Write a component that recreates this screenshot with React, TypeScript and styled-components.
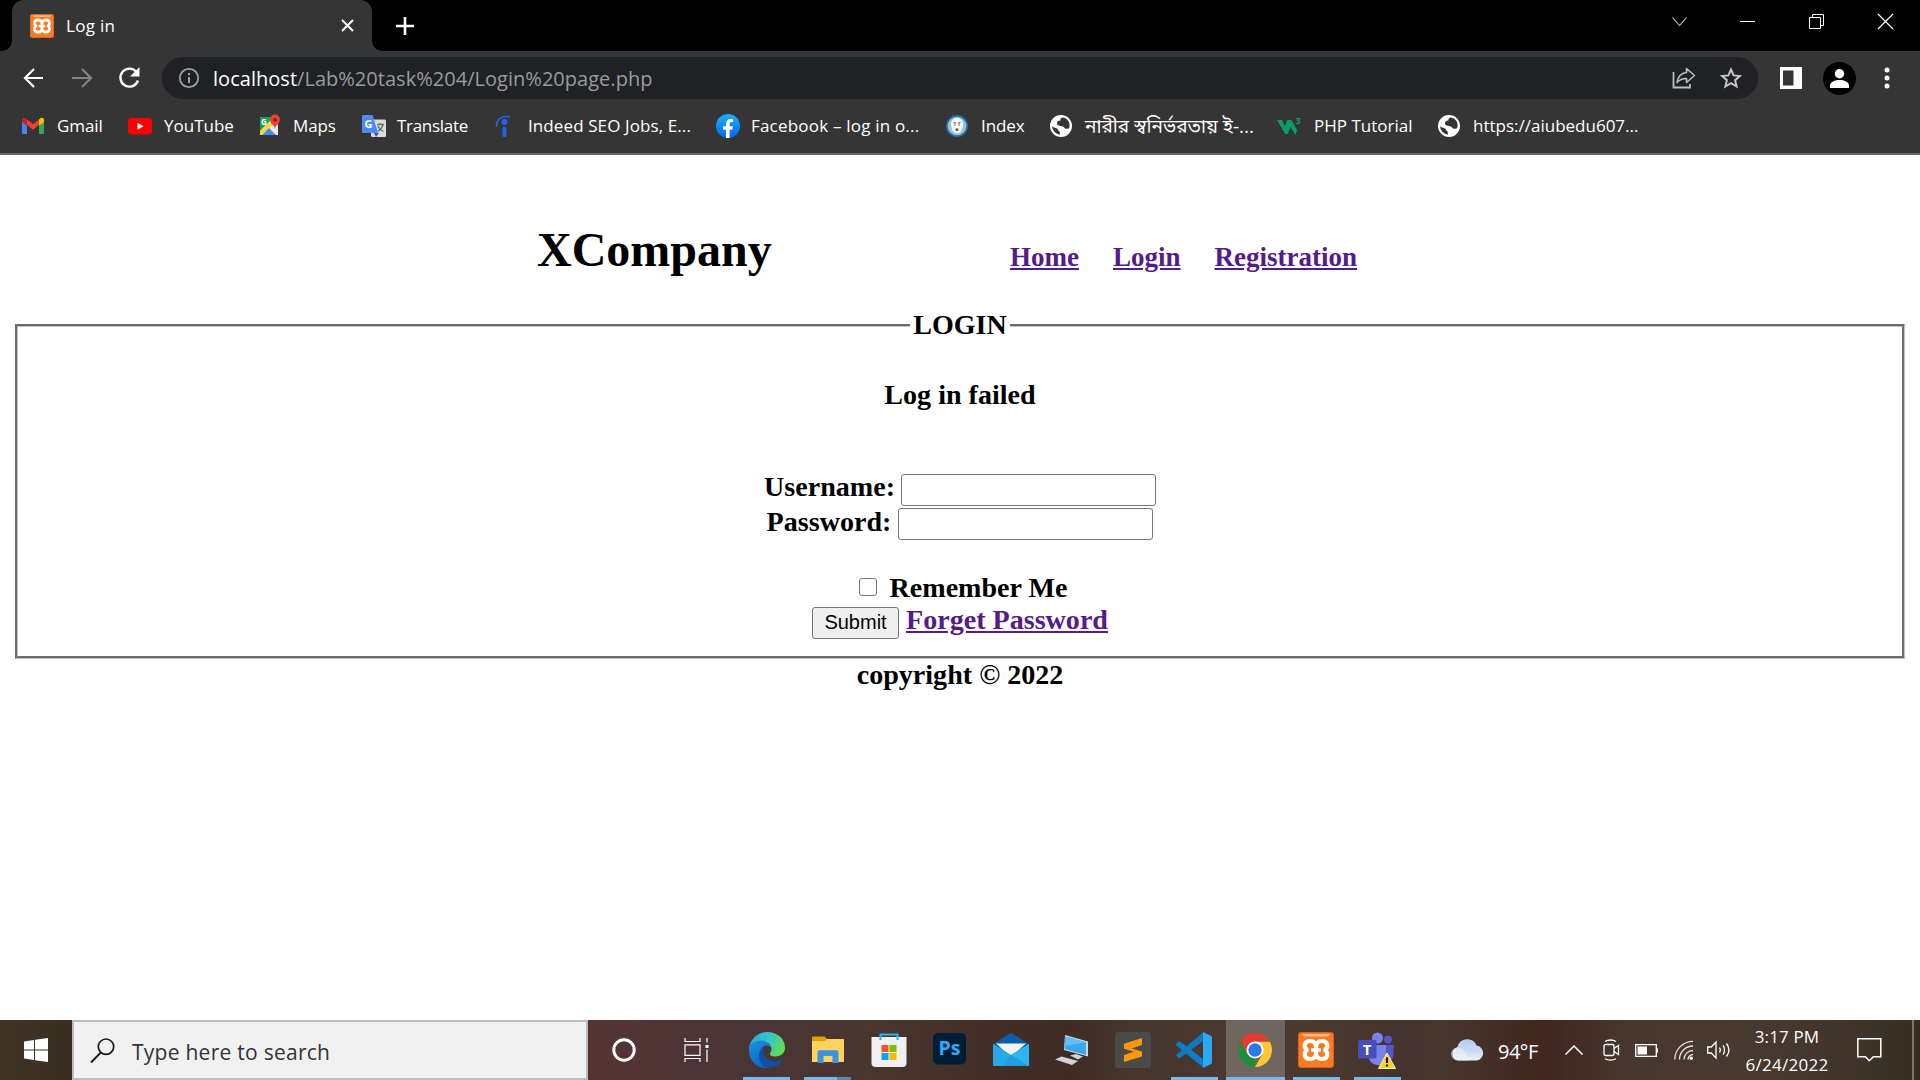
import React from "react";
import styled, { createGlobalStyle } from "styled-components";

const UI = `"Open Sans", "Noto Sans", "Noto Sans Bengali", sans-serif`;
const SERIF = `"Liberation Serif", "Times New Roman", serif`;

const GlobalStyle = createGlobalStyle`
  *, *::before, *::after { box-sizing: border-box; }
  html, body { margin: 0; background: #fff; overflow: hidden; }
  svg { display: block; flex: none; overflow: visible; }
`;

const Screen = styled.div`
  width: 1920px;
  height: 1080px;
  display: flex;
  flex-direction: column;
  overflow: hidden;
`;

/* ---------- browser chrome ---------- */

const TabStrip = styled.header`
  height: 51px;
  flex: none;
  display: flex;
  background: #000;
  padding-left: 12px;
`;

const Tab = styled.div`
  position: relative;
  width: 360px;
  height: 51px;
  display: flex;
  align-items: center;
  padding: 0 18px 0 18px;
  background: #353535;
  border-radius: 12px 12px 0 0;
  &::before, &::after {
    content: "";
    position: absolute;
    bottom: 0;
    width: 10px;
    height: 10px;
  }
  &::before { left: -10px; background: radial-gradient(circle at 0 0, transparent 9.5px, #353535 10px); }
  &::after { right: -10px; background: radial-gradient(circle at 100% 0, transparent 9.5px, #353535 10px); }
`;

const Label = styled.span<{ $ls?: number; $ml?: number; $size?: number; $color?: string; $drop?: number }>`
  font-family: ${UI};
  font-size: ${(p) => p.$size ?? 17}px;
  line-height: 24px;
  color: ${(p) => p.$color ?? "#fff"};
  white-space: nowrap;
  letter-spacing: ${(p) => p.$ls ?? 0}px;
  margin-left: ${(p) => p.$ml ?? 0}px;
  padding-top: ${(p) => p.$drop ?? 0}px;
`;

const Spacer = styled.div`
  flex: 1;
`;

const NewTab = styled.div`
  display: flex;
  align-items: center;
  margin-left: 24px;
`;

const WindowButtons = styled.div`
  display: flex;
  height: 43px;
`;

const WindowButton = styled.div<{ $w: number }>`
  width: ${(p) => p.$w}px;
  display: flex;
  align-items: center;
  justify-content: center;
`;

const Toolbar = styled.div`
  height: 54px;
  flex: none;
  display: flex;
  align-items: center;
  background: #353535;
  padding: 0 20px 0 21px;
`;

const NavIcons = styled.div`
  display: flex;
  align-items: center;
  width: 141px;
  gap: 24.5px;
`;

const AddressBar = styled.div`
  width: 1596px;
  height: 42px;
  display: flex;
  align-items: center;
  border-radius: 21px;
  background: #202124;
  padding: 0 16px 0 16px;
`;

const Url = styled.span`
  font-family: ${UI};
  font-size: 20px;
  line-height: 28px;
  letter-spacing: 0.03px;
  color: #9a9b9d;
  margin-left: 13px;
  padding-top: 1px;
  white-space: nowrap;
  b { font-weight: 400; color: #fff; }
`;

const IconRow = styled.div<{ $gap: number; $ml?: number }>`
  display: flex;
  align-items: center;
  gap: ${(p) => p.$gap}px;
  margin-left: ${(p) => p.$ml ?? 0}px;
`;

const Bookmarks = styled.nav`
  height: 50px;
  flex: none;
  display: flex;
  background: #353535;
  border-bottom: 2px solid #676767;
  padding: 0 0 6px 20px;
`;

const Bookmark = styled.div<{ $w: number }>`
  width: ${(p) => p.$w}px;
  flex: none;
  display: flex;
  align-items: center;
`;

/* ---------- web page ---------- */

const Page = styled.main`
  height: 865px;
  flex: none;
  background: #fff;
  color: #000;
  font-family: ${SERIF};
  font-weight: 700;
  font-size: 28.08px;
  line-height: 32px;
  padding: 67px 15px 0;
`;

const SiteHeader = styled.div`
  display: flex;
  align-items: baseline;
  height: 87px;
  padding-left: 522px;
`;

const Title = styled.h1`
  margin: 0;
  width: 473px;
  font-size: 48px;
  line-height: 56px;
`;

const Link = styled.a`
  color: #551a8b;
  text-decoration: underline;
`;

const Links = styled.div`
  display: flex;
  gap: 34px;
  font-size: 27px;
`;

const LoginBox = styled.fieldset`
  margin: 0;
  padding: 0;
  height: 350px;
  border: 3px groove #c0c0c0;
`;

const Legend = styled.legend`
  margin: 0 auto;
  padding: 0 3px;
`;

const Message = styled.div`
  margin-top: 38px;
  text-align: center;
`;

const FormRow = styled.div<{ $mt?: number; $h?: number; $gap?: number; $shift?: number }>`
  display: flex;
  justify-content: center;
  align-items: flex-start;
  height: ${(p) => p.$h ?? 32}px;
  margin-top: ${(p) => p.$mt ?? 0}px;
  gap: ${(p) => p.$gap ?? 7}px;
  padding-left: ${(p) => p.$shift ?? 0}px;
`;

const Field = styled.input<{ $mt: number }>`
  width: 255px;
  height: 32px;
  margin: ${(p) => p.$mt}px 0 0;
  border: 1px solid #767676;
  border-radius: 3px;
  background: #fff;
  padding: 1px 3px;
  font: 20px "Liberation Sans", Arial, sans-serif;
`;

const Check = styled.input`
  appearance: none;
  width: 18px;
  height: 18px;
  margin: 6px 0 0;
  border: 1px solid #767676;
  border-radius: 3px;
  background: #fff;
`;

const Submit = styled.button`
  width: 87px;
  height: 32px;
  margin: 3px 0 0;
  padding: 0 0 2px;
  border: 1px solid #767676;
  border-radius: 3px;
  background: #efefef;
  color: #000;
  font: 20px/28px "Liberation Sans", Arial, sans-serif;
`;

const Copyright = styled.footer`
  text-align: center;
`;

/* ---------- taskbar ---------- */

const Taskbar = styled.footer`
  height: 60px;
  flex: none;
  display: flex;
  background: linear-gradient(90deg, #3f3426 0, #392e22 72px, #553433 588px, #4a3535 740px, #48362f 870px, #422e27 1000px, #3f2c25 1070px, #46362e 1130px, #4a3831 1240px, #4b3a2f 1300px, #45332d 1400px, #47372f 1440px, #40261f 1545px, #46362e 1620px, #493a31 1740px, #3f3429 1860px, #372d20 1920px);
`;

const Start = styled.div`
  width: 72px;
  display: flex;
  align-items: center;
  justify-content: center;
`;

const Search = styled.div`
  width: 516px;
  display: flex;
  align-items: center;
  background: #f1f1f1;
  border: 2px solid #bdbdbd;
  padding-left: 16px;
`;

const Slot = styled.div`
  width: 72px;
  display: flex;
  align-items: center;
  justify-content: center;
`;

const Apps = styled.div`
  display: flex;
  margin-left: 4px;
  width: 715px;
`;

const TaskButton = styled.div<{ $run?: boolean; $active?: boolean; $split?: boolean }>`
  width: 61.1px;
  height: 60px;
  flex: none;
  display: flex;
  align-items: center;
  justify-content: center;
  background:
    ${(p) =>
      p.$active
        ? "linear-gradient(#76b9ed, #76b9ed) center bottom / 59px 3px no-repeat, linear-gradient(#70665f, #70665f) center / 59px 60px no-repeat"
        : p.$split
        ? "linear-gradient(90deg, #76b9ed 33px, #5b87ab 33px) center bottom / 47px 3px no-repeat"
        : p.$run
        ? "linear-gradient(#76b9ed, #76b9ed) center bottom / 47px 3px no-repeat"
        : "none"};
`;

const Tray = styled.div`
  flex: 1;
  display: flex;
  align-items: center;
`;

const TrayItem = styled.div<{ $w: number }>`
  width: ${(p) => p.$w}px;
  flex: none;
  display: flex;
  align-items: center;
`;

const Clock = styled.div`
  width: 84px;
  flex: none;
  display: flex;
  flex-direction: column;
  align-items: center;
  gap: 4px;
  padding-top: 2px;
  margin-right: 28px;
`;

const ShowDesktop = styled.div`
  width: 8px;
  height: 60px;
  margin-left: auto;
  border-left: 2px solid #7d766e;
`;

const GlyphText = styled.text`
  font-family: ${UI};
  font-weight: 700;
`;

/* ---------- icons ---------- */

const Xampp = ({ w, h }: { w: number; h: number }) => (
  <svg width={w} height={h} viewBox="0 0 36 36" preserveAspectRatio="none">
    <rect width="36" height="36" rx="3" fill="#d9621b" />
    <rect x="1" y="1" width="34" height="34" rx="3" fill="#fb7a24" />
    <path d="M4 2h28l-2 2.500H6z" fill="#fcb88c" />
    <path
      d="M18 15.800C17.800 11 20 9 24 9c5.500 0 6.800 5.500 3.200 9 3.600 3.500 2.300 9-3.200 9-4 0-6.200-2-6-6.800.2 4.800-2 6.800-6 6.800-5.500 0-6.800-5.500-3.200-9C5.200 14.500 6.500 9 12 9c4 0 6.200 2 6 6.800z"
      fill="none"
      stroke="#fff"
      strokeWidth="4.200"
      strokeLinejoin="round"
    />
    <path d="M13 18h10" stroke="#fff" strokeWidth="3.600" />
  </svg>
);

const CloseTab = () => (
  <svg width="13" height="13" viewBox="0 0 13 13">
    <path d="M1 1l11 11M12 1L1 12" stroke="#fff" strokeWidth="2" />
  </svg>
);

const Back = ({ flip }: { flip?: boolean }) => (
  <svg width="24" height="22" viewBox="0 0 24 22">
    <path
      d={flip ? "M2 11h19M12 2l9 9-9 9" : "M22 11H4M13 2l-9 9 9 9"}
      fill="none"
      stroke={flip ? "#838383" : "#fff"}
      strokeWidth="2.200"
    />
  </svg>
);

const Reload = () => (
  <svg width="23" height="22" viewBox="0 0 23 22">
    <path d="M18.500 5A9 9 0 1 0 20 13.500" fill="none" stroke="#fff" strokeWidth="2.400" />
    <path d="M21.500 0v9.500H12z" fill="#fff" />
  </svg>
);

const Info = () => (
  <svg width="22" height="22" viewBox="0 0 22 22">
    <circle cx="11" cy="11" r="9.200" fill="none" stroke="#9aa0a6" strokeWidth="1.800" />
    <path d="M11 10v6M11 6v2.200" stroke="#9aa0a6" strokeWidth="2" />
  </svg>
);

const Share = () => (
  <svg width="24" height="22" viewBox="0 0 24 22">
    <path d="M1.500 5v15.500h16.500V17" fill="none" stroke="#bdbdbd" strokeWidth="1.800" />
    <path d="M14.500 1.500l8 7-8 7v-4c-4.500 0-7 1.200-9.500 4 .8-5.500 4-9.300 9.500-10z" fill="none" stroke="#bdbdbd" strokeWidth="1.600" strokeLinejoin="round" />
  </svg>
);

const Star = () => (
  <svg width="22" height="22" viewBox="0 0 22 22">
    <path d="M11 2.500l2.600 5.900 6.300.6-4.800 4.200 1.500 6.300L11 16.200l-5.600 3.300 1.500-6.300L2.100 9l6.300-.6z" fill="none" stroke="#c4c4c4" strokeWidth="2" />
  </svg>
);

const SidePanel = () => (
  <svg width="22" height="22" viewBox="0 0 22 22">
    <path d="M0 0h22v22H0zM3 3.500v15h10.500v-15z" fill="#fff" fillRule="evenodd" />
  </svg>
);

const Avatar = () => (
  <svg width="33" height="33" viewBox="0 0 33 33">
    <circle cx="16.500" cy="16.500" r="16.500" fill="#000" />
    <circle cx="16.500" cy="11.800" r="4.700" fill="#fff" />
    <path d="M7 26v-2.500c0-3.500 5-5.500 9.500-5.500s9.500 2 9.500 5.500V26z" fill="#fff" />
  </svg>
);

const Dots = () => (
  <svg width="6" height="22" viewBox="0 0 6 22">
    <circle cx="3" cy="3" r="2.500" fill="#fff" />
    <circle cx="3" cy="11" r="2.500" fill="#fff" />
    <circle cx="3" cy="19" r="2.500" fill="#fff" />
  </svg>
);

const Gmail = () => (
  <svg width="24" height="24" viewBox="0 0 24 24">
    <path d="M2 7v11.500c0 .8.600 1.500 1.500 1.500H7V10z" fill="#4285f4" />
    <path d="M19 10v10h3.500c.8 0 1.500-.7 1.500-1.500V7z" fill="#34a853" />
    <path d="M7 5.500l6 4.600 6-4.600v5.300l-6 5-6-5z" fill="#ea4335" />
    <path d="M2 6v2l5 4V5.500L5.500 4.200C4 3.200 2 4 2 6z" fill="#c5221f" />
    <path d="M19 11.800V5.500l1.500-1.300C22 3.200 24 4 24 6v2z" fill="#fbbc04" />
  </svg>
);

const YouTube = () => (
  <svg width="24" height="24" viewBox="0 0 24 24">
    <rect x="0" y="4" width="24" height="16.500" rx="4" fill="#f00" />
    <path d="M9.500 8.700v7l6-3.500z" fill="#fff" />
  </svg>
);

const Maps = () => (
  <svg width="24" height="24" viewBox="0 0 24 24">
    <path d="M2 3h18v18H2z" fill="#e8e8e8" />
    <path d="M2 3h14L2 17z" fill="#1e9e57" />
    <path d="M2 17L14 6l3 3L4 21H2z" fill="#fdd835" />
    <path d="M11 14l7 7H4z" fill="#4a89f3" />
    <GlyphText x="3" y="11" fontSize="8" fill="#fff">G</GlyphText>
    <path d="M17 15c0-4-5-5-5-9.500a5 5 0 0 1 10 0C22 10 17 11 17 15z" fill="#ea4335" />
    <circle cx="17" cy="5.800" r="1.900" fill="#8c1d18" />
  </svg>
);

const Translate = () => (
  <svg width="25" height="24" viewBox="0 0 25 24">
    <rect x="9" y="5.500" width="15" height="17.500" rx="1.500" fill="#dcdcdc" />
    <path d="M12 19h5l-3 4z" fill="#3a54c4" />
    <path d="M15 10.500h7M18.500 9v1.500M21 10.500c-.6 3-3 5.500-5.500 7M16 12c1 2.500 3 4.500 5.500 5.500" stroke="#5a7478" strokeWidth="1.300" fill="none" />
    <path d="M1.500 1h9.200l5.300 18H1.500A1.500 1.500 0 0 1 0 17.500v-15A1.500 1.500 0 0 1 1.500 1z" fill="#4c8bf5" />
    <GlyphText x="2.500" y="14" fontSize="11" fill="#fff">G</GlyphText>
  </svg>
);

const Indeed = () => (
  <svg width="18" height="24" viewBox="0 0 18 24">
    <path d="M1.500 13C1 7 5 1 15 3" fill="none" stroke="#2163f0" strokeWidth="1.500" />
    <circle cx="9.500" cy="8" r="2.900" fill="#2163f0" />
    <rect x="7.600" y="12.500" width="3.800" height="10.500" rx="1.500" fill="#2163f0" />
  </svg>
);

const Facebook = () => (
  <svg width="24" height="24" viewBox="0 0 24 24">
    <defs>
      <linearGradient id="fb" x1="0" y1="0" x2="0" y2="1">
        <stop offset="0" stopColor="#1aafff" />
        <stop offset="1" stopColor="#0567ea" />
      </linearGradient>
    </defs>
    <circle cx="12" cy="12" r="12" fill="url(#fb)" />
    <path d="M10 24v-8.300H7V12.200h3V9.600c0-3 1.800-4.700 4.500-4.700 1.300 0 2.500.2 2.500.2V8h-1.500c-1.500 0-1.900.9-1.900 1.900v2.300h3.200l-.5 3.500h-2.700V24z" fill="#fff" />
  </svg>
);

const IndexSeal = () => (
  <svg width="24" height="24" viewBox="0 0 24 24">
    <circle cx="12" cy="12" r="11" fill="#2d6d9e" />
    <circle cx="12" cy="12" r="9.300" fill="#8fc4e4" />
    <path d="M12 4c3.500 0 6 2.500 6 6 0 5-2.500 9.500-6 9.500S6 15 6 10c0-3.500 2.500-6 6-6z" fill="#f2f6f8" />
    <path d="M8.500 8.500l2.500.8M15.500 8.500l-2.500.8M9 11h1.500M13.500 11H15" stroke="#6c4b46" strokeWidth="1.100" fill="none" />
    <path d="M10.500 15c.8-1 2.200-1 3 0l-.5 2h-2z" fill="#7a4a44" />
  </svg>
);

const Globe = () => (
  <svg width="24" height="24" viewBox="0 0 24 24">
    <circle cx="12" cy="12" r="11" fill="#fff" />
    <path d="M14 3.500c-2 0-3 1.500-2.500 3-2.500 0-3.500 1-3.500 3 0 2 2 2 3.500 2.500 2 .5 3 0 4 2 1 1.500 3 0 4.500.5A9 9 0 0 0 17 4.500zM3 12c1 1.500 3.500 1.500 5 2.500 1.200 1 1 2 2 2.500 1.200.5.500 2 1 3.700A9 9 0 0 1 3 12z" fill="#353535" />
  </svg>
);

const W3 = () => (
  <svg width="26" height="24" viewBox="0 0 26 24">
    <path d="M0 6h5l2.800 6L10.300 6h4.200l5.500 10-1.500 5-5-8-2.800 7h-2.500z" fill="#0a9d67" />
    <GlyphText x="18.500" y="10" fontSize="9" fill="#0a9d67">3</GlyphText>
  </svg>
);

const Windows = () => (
  <svg width="24" height="24" viewBox="0 0 24 24">
    <path d="M0 3.400l10-1.400v9.500H0zM11 1.800L24 0v11.500H11zM0 12.500h10V22L0 20.600zM11 12.500h13V24l-13-1.800z" fill="#fff" />
  </svg>
);

const Magnifier = () => (
  <svg width="25" height="25" viewBox="0 0 25 25">
    <circle cx="16" cy="8.700" r="7.700" fill="none" stroke="#1a1a1a" strokeWidth="1.700" />
    <path d="M10.800 14.500L1 24.500" stroke="#1a1a1a" strokeWidth="1.800" />
  </svg>
);

const Cortana = () => (
  <svg width="24" height="24" viewBox="0 0 24 24">
    <circle cx="12" cy="12" r="10.200" fill="none" stroke="#fff" strokeWidth="3" />
  </svg>
);

const TaskView = () => (
  <svg width="25" height="24" viewBox="0 0 25 24">
    <path d="M1 0v3.500h15V0M1 24v-3.500h15V24M1 6.800h15v10.500H1zM23 0v4.500M23 11.500V24" fill="none" stroke="#fff" strokeWidth="1.200" />
    <rect x="21.500" y="7" width="3" height="3" fill="#fff" />
  </svg>
);

const Edge = () => (
  <svg width="36" height="36" viewBox="0 0 36 36">
    <defs>
      <linearGradient id="e1" x1="0" y1="0.300" x2="1" y2="0.600">
        <stop offset="0" stopColor="#2aa5dd" />
        <stop offset="0.500" stopColor="#35c8c4" />
        <stop offset="1" stopColor="#62dd52" />
      </linearGradient>
      <linearGradient id="e2" x1="0" y1="0" x2="0.600" y2="1">
        <stop offset="0" stopColor="#1e90dc" />
        <stop offset="1" stopColor="#0b63c4" />
      </linearGradient>
    </defs>
    <path d="M0 17C1 7 8.500 0 18 0c10.500 0 18 7 18 15.500 0 5.500-4 9-9.500 9-3.500 0-6-1-5.500-3 .5-1.500 1.500-2 1.500-4.500C22.500 13.500 18 11 13 11 7 11 2 13 0 17z" fill="url(#e1)" />
    <path d="M0 18c0-6 5-9.500 11.500-9.500 6 0 11 3.500 11 8-1-2.500-3.500-3.500-5.500-3-4 1-5 5-5 8 0 8 8 11 13 10.500-2.500 3-5.500 4-8 4C7 36 0 28 0 18z" fill="url(#e2)" />
    <path d="M17 13.500c-4 2.500-4 11 3 14.500 5 2.500 10 1 12.500-.5 1-.5 1.300.2.800 1C30 33.500 24.500 36 19.500 35.500 13 34.500 9.500 29 10 23c.4-5.500 3.500-9 7-9.500z" fill="#124f9c" />
  </svg>
);

const Explorer = () => (
  <svg width="34" height="28" viewBox="0 0 34 28">
    <path d="M1 1.500C1 1 1.500.5 2 .5h11.500L16 3H33v5H1z" fill="#dd9f0c" />
    <path d="M1 5h13l2-2h16c.6 0 1 .4 1 1v21c0 .6-.4 1-1 1H1z" fill="#ffd35c" />
    <path d="M6.500 27V16c0-1 .7-1.700 1.700-1.700h17.600c1 0 1.700.7 1.700 1.700v11h-6v-7h-9v7z" fill="#3a93dd" />
  </svg>
);

const Store = () => (
  <svg width="36" height="36" viewBox="0 0 36 36">
    <path d="M9.500 8V2.500h17V8" fill="none" stroke="#29b0ee" strokeWidth="2" />
    <path d="M.5 5h35v26a4 4 0 0 1-4 4h-27a4 4 0 0 1-4-4z" fill="#f0f0f0" />
    <path d="M9.500 4v4M26.500 4v4" stroke="#29b0ee" strokeWidth="2" />
    <rect x="10.500" y="13" width="7" height="7" fill="#f35325" />
    <rect x="18.500" y="13" width="7" height="7" fill="#81bc06" />
    <rect x="10.500" y="21" width="7" height="7" fill="#05a6f0" />
    <rect x="18.500" y="21" width="7" height="7" fill="#ffba08" />
  </svg>
);

const Photoshop = () => (
  <svg width="34" height="34" viewBox="0 0 34 34">
    <rect x="0" y="0" width="33" height="31.500" rx="5" fill="#001d34" />
    <GlyphText x="5.500" y="22" fontSize="20" textLength="22" lengthAdjust="spacingAndGlyphs" fill="#31a8ff">Ps</GlyphText>
  </svg>
);

const Mail = () => (
  <svg width="36" height="34" viewBox="0 0 36 34">
    <path d="M0 11L18 0l18 11-8 10H8z" fill="#0b5cad" />
    <path d="M3 10.500h30L18 24z" fill="#f3f3f3" />
    <path d="M0 11l18 11L36 11v22H0z" fill="#2ab4ee" />
    <path d="M18 22L36 11v22z" fill="#2fb6f0" />
    <path d="M18 22L36 33H0V11z" fill="#27a9e8" />
    <path d="M18 22l18 11H9z" fill="#1e95dc" opacity="0.500" />
  </svg>
);

const Computer = () => (
  <svg width="36" height="32" viewBox="0 0 36 32">
    <path d="M11 1l23 6.500v15L10 16z" fill="#c9d8e2" />
    <path d="M11.500 2.500L32 8.200V21L10.700 15z" fill="#3ba7f0" />
    <path d="M11.500 2.500L32 8.200 11 12z" fill="#62bdf6" />
    <path d="M16 21.500l6-1.500 7 2.500-5 3zM1 25.500l6.500-3L24 27l-6 4z" fill="#ced4da" />
  </svg>
);

const Sublime = () => (
  <svg width="36" height="36" viewBox="0 0 36 36">
    <rect width="36" height="36" rx="3" fill="#4a4a4a" />
    <path d="M9 11.800L27 6v7L16.500 16.500 27 19.500v5L9 30v-7l10-3.200-10-3z" fill="#ff9800" />
  </svg>
);

const VSCode = () => (
  <svg width="36" height="36" viewBox="0 0 36 36">
    <path d="M0 12l2.500-2.500 2 .2L27 27v8.500L.5 13.500z" fill="#0a7dcb" />
    <path d="M0 23.500L2.500 26l2-.2L27 9V.5L.5 22.500z" fill="#1279bd" />
    <path d="M27 0l8 4c.6.300 1 .800 1 1.500v25c0 .7-.4 1.200-1 1.500l-8 4z" fill="#2aa8f2" />
  </svg>
);

const Chrome = () => (
  <svg width="34" height="34" viewBox="0 0 34 34">
    <path d="M17 17v8.500L17 34A17 17 0 0 1 2.300 8.500z" fill="#1e8e3e" />
    <path d="M17 8.500h14.700A17 17 0 0 1 17 34l7.400-12.800z" fill="#fcc934" />
    <path d="M17 8.500h14.700A17 17 0 0 0 2.300 8.500l7.300 12.700z" fill="#e33b2e" />
    <circle cx="17" cy="17" r="8.500" fill="#fff" />
    <circle cx="17" cy="17" r="6.700" fill="#2a7ae8" />
  </svg>
);

const Teams = () => (
  <svg width="38" height="38" viewBox="0 0 38 38">
    <circle cx="19.500" cy="7" r="5.500" fill="#7b83eb" />
    <circle cx="30" cy="8.500" r="4" fill="#5059c9" />
    <path d="M24 14h11.500v10c0 5-5 7-9 5z" fill="#5059c9" />
    <path d="M11 14h17v13c0 6-5 8-9 7-5-1-8-4-8-8z" fill="#7b83eb" />
    <rect x="0" y="9" width="18.500" height="18.500" rx="1.500" fill="#464eb8" />
    <GlyphText x="4.800" y="23.500" fontSize="15" fill="#fff">T</GlyphText>
    <path d="M29 22l8.500 15.500h-17z" fill="#ffd21c" stroke="#fff3b8" strokeWidth="1" strokeLinejoin="round" />
    <path d="M29 26.500v5.500M29 33.500v2" stroke="#111" strokeWidth="2.200" />
  </svg>
);

const Cloud = () => (
  <svg width="34" height="22" viewBox="0 0 34 22">
    <defs>
      <linearGradient id="cl" x1="0" y1="0" x2="0" y2="1">
        <stop offset="0" stopColor="#b3cdf6" />
        <stop offset="0.600" stopColor="#cddcf3" />
        <stop offset="1" stopColor="#eef3fa" />
      </linearGradient>
    </defs>
    <path d="M7 21.500a7 7 0 0 1-.5-13.500A10 10 0 0 1 25.500 6.500 7.600 7.600 0 0 1 26 21.500z" fill="url(#cl)" />
    <path d="M0 15a7 7 0 0 1 13-3c3 1 2 5 5 9.500H7A7 7 0 0 1 0 15z" fill="#edf3fb" opacity="0.600" />
  </svg>
);

type BookmarkItem = { icon: React.ReactNode; text: string; w: number; ml: number; ls?: number; size?: number };

const bookmarks: BookmarkItem[] = [
  { icon: <Gmail />, text: "Gmail", w: 108, ml: 13, ls: -0.1 },
  { icon: <YouTube />, text: "YouTube", w: 130, ml: 12 },
  { icon: <Maps />, text: "Maps", w: 104, ml: 11, ls: -0.1 },
  { icon: <Translate />, text: "Translate", w: 133, ml: 10, ls: -0.3 },
  { icon: <Indeed />, text: "Indeed SEO Jobs, E...", w: 221, ml: 15, ls: 0.1 },
  { icon: <Facebook />, text: "Facebook – log in o...", w: 229, ml: 11, ls: 0.2 },
  { icon: <IndexSeal />, text: "Index", w: 104, ml: 12, ls: -0.1 },
  { icon: <Globe />, text: "নারীর স্বনির্ভরতায় ই-...", w: 228, ml: 12, size: 19 },
  { icon: <W3 />, text: "PHP Tutorial", w: 160, ml: 11 },
  { icon: <Globe />, text: "https://aiubedu607...", w: 230, ml: 12 },
];

export default function App() {
  return (
    <>
      <GlobalStyle />
      <Screen>
        <TabStrip>
          <Tab>
            <Xampp w={24} h={24} />
            <Label $ml={12} $ls={0.3}>Log in</Label>
            <Spacer />
            <CloseTab />
          </Tab>
          <NewTab>
            <svg width="18" height="18" viewBox="0 0 18 18">
              <path d="M9 0v18M0 9h18" stroke="#fff" strokeWidth="2.600" />
            </svg>
          </NewTab>
          <Spacer />
          <WindowButtons>
            <WindowButton $w={68}>
              <svg width="15" height="9" viewBox="0 0 15 9">
                <path d="M.5.500l7 8 7-8" fill="none" stroke="#c8c8c8" strokeWidth="1.100" />
              </svg>
            </WindowButton>
            <WindowButton $w={69}>
              <svg width="15" height="1">
                <rect width="15" height="1" fill="#fff" />
              </svg>
            </WindowButton>
            <WindowButton $w={69}>
              <svg width="15" height="15" viewBox="0 0 15 15">
                <path d="M.5 3.500h11v11H.5zM3.500 3.500v-3h11v11h-3" fill="none" stroke="#fff" />
              </svg>
            </WindowButton>
            <WindowButton $w={69}>
              <svg width="15" height="15" viewBox="0 0 15 15">
                <path d="M0 0l15 15M15 0L0 15" stroke="#fff" strokeWidth="1.200" />
              </svg>
            </WindowButton>
          </WindowButtons>
        </TabStrip>
        <Toolbar>
          <NavIcons>
            <Back />
            <Back flip />
            <Reload />
          </NavIcons>
          <AddressBar>
            <Info />
            <Url>
              <b>localhost</b>/Lab%20task%204/Login%20page.php
            </Url>
            <Spacer />
            <IconRow $gap={24}>
              <Share />
              <Star />
            </IconRow>
          </AddressBar>
          <IconRow $gap={0} $ml={22}>
            <SidePanel />
          </IconRow>
          <IconRow $gap={28} $ml={21}>
            <Avatar />
            <Dots />
          </IconRow>
        </Toolbar>
        <Bookmarks>
          {bookmarks.map((b) => (
            <Bookmark key={b.text} $w={b.w}>
              {b.icon}
              <Label $ml={b.ml} $ls={b.ls} $size={b.size}>
                {b.text}
              </Label>
            </Bookmark>
          ))}
        </Bookmarks>

        <Page>
          <SiteHeader>
            <Title>XCompany</Title>
            <Links>
              <Link>Home</Link>
              <Link>Login</Link>
              <Link>Registration</Link>
            </Links>
          </SiteHeader>
          <LoginBox>
            <Legend>LOGIN</Legend>
            <Message>Log in failed</Message>
            <FormRow $mt={60} $h={35} $gap={6}>
              <label htmlFor="user">Username:</label>
              <Field id="user" type="text" $mt={3} />
            </FormRow>
            <FormRow>
              <label htmlFor="pass">Password:</label>
              <Field id="pass" type="password" $mt={2} />
            </FormRow>
            <FormRow $mt={34} $gap={13} $shift={6}>
              <Check id="remember" type="checkbox" />
              <label htmlFor="remember">Remember Me</label>
            </FormRow>
            <FormRow>
              <Submit type="button">Submit</Submit>
              <Link>Forget Password</Link>
            </FormRow>
          </LoginBox>
          <Copyright>copyright © 2022</Copyright>
        </Page>

        <Taskbar>
          <Start>
            <Windows />
          </Start>
          <Search>
            <Magnifier />
            <Label $ml={17} $size={21} $ls={0.26} $color="#333" $drop={4}>
              Type here to search
            </Label>
          </Search>
          <Slot>
            <Cortana />
          </Slot>
          <Slot>
            <TaskView />
          </Slot>
          <Apps>
            <TaskButton $run><Edge /></TaskButton>
            <TaskButton $split><Explorer /></TaskButton>
            <TaskButton><Store /></TaskButton>
            <TaskButton><Photoshop /></TaskButton>
            <TaskButton><Mail /></TaskButton>
            <TaskButton><Computer /></TaskButton>
            <TaskButton><Sublime /></TaskButton>
            <TaskButton $run><VSCode /></TaskButton>
            <TaskButton $active><Chrome /></TaskButton>
            <TaskButton $run><Xampp w={36} h={36} /></TaskButton>
            <TaskButton $run><Teams /></TaskButton>
          </Apps>
          <Tray>
            <TrayItem $w={47}>
              <Cloud />
            </TrayItem>
            <TrayItem $w={67}>
              <Label $size={20} $ls={-0.5} $drop={4}>94°F</Label>
            </TrayItem>
            <TrayItem $w={38}>
              <svg width="18" height="10" viewBox="0 0 18 10">
                <path d="M.5 9.500L9 1l8.500 8.500" fill="none" stroke="#fff" strokeWidth="1.500" />
              </svg>
            </TrayItem>
            <TrayItem $w={32}>
              <svg width="17" height="22" viewBox="0 0 17 22">
                <rect x="1" y="5.500" width="10" height="11" rx="1.500" fill="none" stroke="#fff" strokeWidth="1.300" />
                <path d="M11 9.500l4.500-3v9l-4.500-3M2 2.500c3-2 8-2 11 0M2 19.800c3 1.800 8 1.800 11 0" fill="none" stroke="#fff" strokeWidth="1.300" />
              </svg>
            </TrayItem>
            <TrayItem $w={39}>
              <svg width="23" height="13" viewBox="0 0 23 13">
                <path d="M.7.700h20.600v11.600H.7zM22.400 4.500v4" fill="none" stroke="#fff" strokeWidth="1.300" />
                <rect x="2.500" y="2.500" width="9.500" height="8" fill="#fff" />
              </svg>
            </TrayItem>
            <TrayItem $w={33}>
              <svg width="20" height="20" viewBox="0 0 20 20">
                <path d="M.8 19.500C.8 9.500 9 1.300 19 1.300M5.500 19.500C5.500 12 11.500 6 19 6M10 19.500c0-5 4-9 9-9" fill="none" stroke="#e8e2de" strokeWidth="1.300" />
                <path d="M14 19.500c0-2.500 2-4.800 5-4.800" fill="none" stroke="#fff" strokeWidth="1.300" />
                <circle cx="17.300" cy="18.300" r="1.700" fill="#fff" />
              </svg>
            </TrayItem>
            <TrayItem $w={38}>
              <svg width="24" height="20" viewBox="0 0 24 20">
                <path d="M.7 7h3.500L9 2v16l-4.800-5H.7z" fill="none" stroke="#fff" strokeWidth="1.300" />
                <path d="M12.500 7.500c1 1.500 1 3.500 0 5M16 5.500c2 2.500 2 6.500 0 9M19.500 3.500c3 4 3 9 0 13" fill="none" stroke="#fff" strokeWidth="1.300" />
              </svg>
            </TrayItem>
            <Clock>
              <Label $ls={0.15}>3:17 PM</Label>
              <Label $ls={0.25}>6/24/2022</Label>
            </Clock>
            <TrayItem $w={25}>
              <svg width="25" height="24" viewBox="0 0 25 24">
                <path d="M.8.800h23v18h-7.500l-4 4-4-4H.8z" fill="none" stroke="#fff" strokeWidth="1.500" />
              </svg>
            </TrayItem>
            <ShowDesktop />
          </Tray>
        </Taskbar>
      </Screen>
    </>
  );
}
